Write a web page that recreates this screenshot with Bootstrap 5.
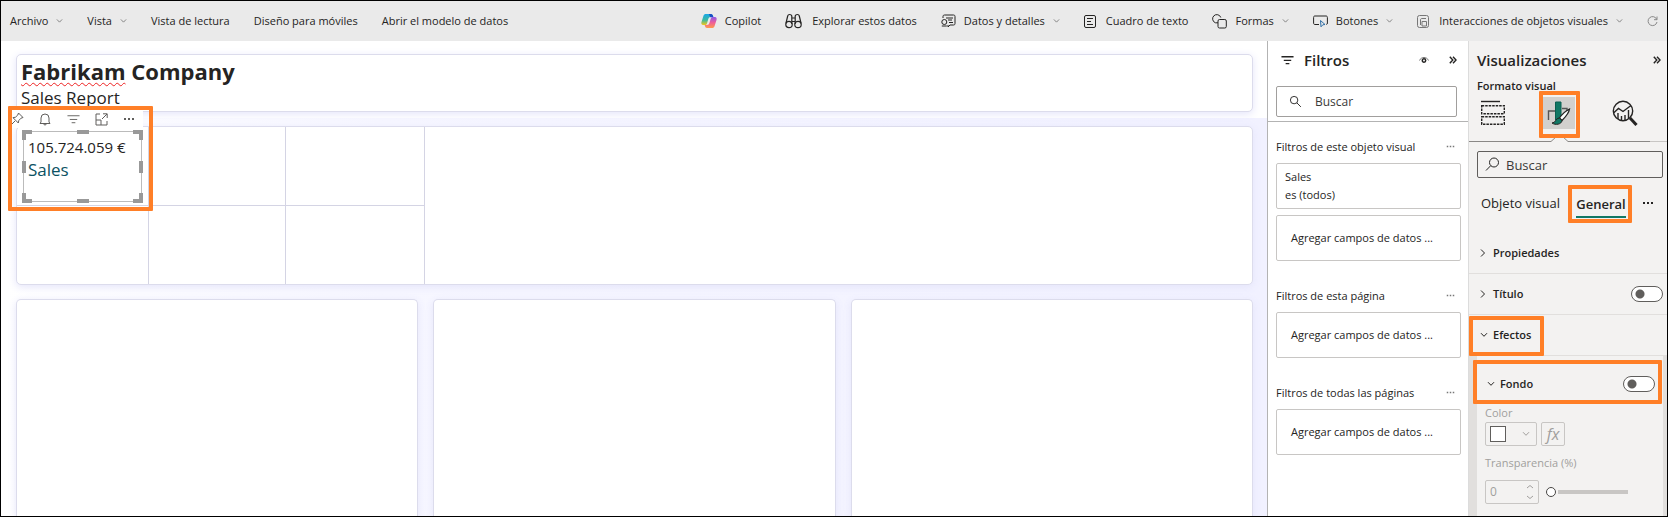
<!DOCTYPE html>
<html lang="es">
<head>
<meta charset="utf-8">
<meta name="viewport" content="width=device-width, initial-scale=1">
<title>Sales Report</title>
<link href="https://cdn.jsdelivr.net/npm/bootstrap@5.3.0/dist/css/bootstrap.min.css" rel="stylesheet">
<style>
:root{--ink:#252423;--orange:#ff7f27;--cardline:#dcdcec}
body{font-family:"Open Sans","Noto Sans",sans-serif;font-size:11px;line-height:18px;color:var(--ink);height:100vh;border:1px solid #000;overflow:hidden;background:#fff}
button{color:inherit;background:none;border:0;padding:0}
svg{display:block;flex:none;fill:none;stroke:currentColor}
.topbar{height:40px;background:#eaeaea;padding:0 9px;white-space:nowrap;overflow:hidden}
.topbar .group{gap:24px}
.topbar button{display:flex;align-items:center;gap:8px}
.topbar .lead-icon{margin-right:2px}
.topbar .chev{color:#777}
/* Report canvas */
.canvas{padding:13px 14px 0 15px;overflow:hidden;background:linear-gradient(90deg,#fff,#f7f7ff 30%,#f1f1ff) 0 77px no-repeat}
.tile{background:#fff;border:1px solid var(--cardline);border-radius:5px;box-shadow:0 2px 8px #e4e4fa}
.head-tile{height:58px;padding:1px 4px 0;margin-bottom:14px}
.head-tile h1{font-size:22px;line-height:30px;font-weight:700;margin:0}
.head-tile p{font-size:17px;line-height:24px;margin:0}
.spell{text-decoration:underline wavy #e22 1px;text-underline-offset:2px;text-decoration-skip-ink:none}
.kpi-tile{height:159px;margin-bottom:14px}
.kpi-grid{display:grid;grid-template-columns:132px 137px 139px;grid-template-rows:1fr 1fr;width:408px;height:100%}
.kpi-grid>div{border-right:1px solid #d4d4e4;border-bottom:1px solid #d4d4e4;position:relative}
.kpi-grid>div:nth-child(n+4){border-bottom:0}
.low-row{display:grid;grid-template-columns:repeat(3,1fr);gap:15px;flex:1}
.low-row .tile{border-bottom:0;border-radius:5px 5px 0 0}
.visual{position:absolute;left:6px;top:4px;width:119px;height:71px;border:1px solid #bbb;background:#fff;padding:4px}
.visual strong{display:block;font-size:15px;line-height:22px;font-weight:400;white-space:nowrap}
.visual span{display:block;font-size:17px;line-height:24px;color:#0b5263}
.visual>svg{position:absolute;left:-2px;top:-2px}
.tools{position:absolute;left:-14px;top:-17px;display:flex}
.tools button{width:28px;height:18px;background:#fff;color:#605e5c;display:flex;align-items:center;justify-content:center}
.hl{position:absolute;border:4px solid var(--orange);border-radius:1px;pointer-events:none;z-index:3}
.hl-kpi{left:-9px;top:-21px;width:145px;height:105px}
/* Filters */
.filters{width:201px;border-left:1px solid #b3b3b3;flex:none}
.filters .top{height:81px;border-bottom:1px solid #b3b3b3;padding:0 11px 0 8px}
.pane-title{font-size:15px;line-height:20px;font-weight:600;margin:0}
.filters .pane-head{height:37px;padding:1px 0 0 5px}
.filters .pane-title{margin-left:10px}
.find{border:1px solid #a19f9d;border-radius:2px;background:#fff;display:flex;align-items:center}
.find input{border:0;background:none;outline:0;padding:0;min-width:0;flex:1;color:#3b3a39}
.find input::placeholder{color:#3b3a39;opacity:1}
.filters .find{height:31px;margin-top:8px;padding-left:12px;gap:9px;font-size:12px}
.filter-sec{padding:0 7px 0 8px;margin-bottom:18px}
.filter-sec h3{font-size:11px;line-height:18px;font-weight:400;margin:0}
.filter-sec .sec-head{height:33px;padding:0 6px 0 0}
.filter-sec .sec-head button{color:#777}
.well-box{border:1px solid #c8c6c4;border-radius:2px;height:46px;padding:4px 8px;margin-bottom:6px}
.add-box{display:flex;align-items:center;padding-left:14px;margin-bottom:0}
/* Visualizations */
.viz{width:199px;background:#f3f2f1;border-left:1px solid #dcdcdc;flex:none}
.viz .pane-head{height:36px;padding:1px 6px 0 8px}
.viz h3{font-size:11px;line-height:18px;font-weight:600;margin:0 8px}
.modes{height:47px;position:relative;display:flex;justify-content:space-between;align-items:flex-start;padding:2px 30px 0 12px}
.modes button{width:24px;height:32px;display:flex;align-items:center;justify-content:center}
.modes button.on{width:32px;background:#d2d0ce}
.modes .rule{position:absolute;left:0;bottom:0;width:100%;height:7px}
.viz .find{height:27px;margin:9px 4px 0 8px;padding-left:7px;gap:6px;border-color:#605e5c;background:#f3f2f1;font-size:13px}
.tabs{height:49px;padding:0 13px 0 12px;margin-bottom:6px;font-size:13px;line-height:20px}
.tabs .on{font-weight:600;border-bottom:2px solid #117865;line-height:24px;margin-top:4px}
.fold{height:41px;border-bottom:1px solid #e1dfdd;padding:0 4px 0 11px;font-weight:600;position:relative}
.fold button,.bg-head button{display:flex;align-items:center;gap:7px;font-weight:600}
.fold button.open,.bg-head button.open{gap:5px}
.switch{appearance:none;width:32px;height:16px;border:1px solid #605e5c;border-radius:8px;background:radial-gradient(circle at 8px 7px,#605e5c 4px,#fff 5px);margin:0}
.sub{flex:1;background:#e1dfdd;padding:0 4px 0 8px}
.sub-in{background:#f3f2f1;padding:0 8px;height:100%;color:#a19f9d;position:relative}
.bg-head{height:48px;padding:8px 0 0 2px;color:var(--ink)}
.sub label,.sub .lab{display:block;font-size:11px;line-height:18px}
.swatch{width:52px;height:24px;border:1px solid #c8c6c4!important;border-radius:2px;display:flex;align-items:center;justify-content:space-between;padding:0 6px 0 4px!important}
.swatch i{width:16px;height:16px;border:1px solid #605e5c;background:#fff}
.fxb{width:24px;height:24px;border:1px solid #c8c6c4!important;border-radius:2px;font:italic 16px/20px "Open Sans",sans-serif}
.num{width:54px;height:24px;border:1px solid #c8c6c4;border-radius:2px;padding:0 4px;display:flex;align-items:center}
.num input{width:30px;border:0;background:none;padding:0;color:#a19f9d;font-size:12px}
.range{appearance:none;width:82px;height:12px;background:linear-gradient(#c8c6c4,#c8c6c4) 12px 4px/70px 4px no-repeat;margin:0 0 0 7px}
.range::-webkit-slider-thumb{appearance:none;width:10px;height:10px;border-radius:50%;border:1px solid #484644;background:#fff}
</style>
</head>
<body class="d-flex flex-column">
<svg width="0" height="0" class="position-absolute">
 <symbol id="cd" viewBox="0 0 8 6"><path d="M1 1.2 4 4.3 7 1.2"/></symbol>
 <symbol id="cr" viewBox="0 0 6 10"><path d="M1 1.5 4.5 5 1 8.5"/></symbol>
 <symbol id="mag" viewBox="0 0 14 14"><circle cx="5.5" cy="5.5" r="4"/><path d="m8.5 8.5 4.3 4.3"/></symbol>
 <symbol id="dots" viewBox="0 0 12 4"><path d="M1 2h2M5 2h2M9 2h2" stroke-width="2"/></symbol>
 <symbol id="dbl" viewBox="0 0 8 8"><path d="m.8.8 3 3.2-3 3.2M4 .8 7 4 4 7.2" stroke-width="1.4"/></symbol>
 <symbol id="fil" viewBox="0 0 14 10"><path d="M.5 1.5h13M3 5.5h8M5 9h4"/></symbol>
</svg>

<nav class="topbar d-flex align-items-center justify-content-between flex-shrink-0">
 <div class="group d-flex">
  <button>Archivo<svg class="chev" width="7" height="6"><use href="#cd"/></svg></button>
  <button>Vista<svg class="chev" width="7" height="6"><use href="#cd"/></svg></button>
  <button>Vista de lectura</button>
  <button>Diseño para móviles</button>
  <button>Abrir el modelo de datos</button>
 </div>
 <div class="group d-flex">
  <button>
   <svg width="16" height="16" viewBox="0 0 16 16">
    <defs><linearGradient id="g1" x2="0" y2="1"><stop stop-color="#1aa7e8"/><stop offset=".55" stop-color="#3cb9a0"/><stop offset="1" stop-color="#f5c518"/></linearGradient>
    <linearGradient id="g2" x2="0" y2="1"><stop stop-color="#8b5be8"/><stop offset=".5" stop-color="#ee5d9a"/><stop offset="1" stop-color="#ff9a4d"/></linearGradient></defs>
    <g stroke="none">
    <path fill="url(#g1)" d="M5 1h5c1.300 0 1.700 1 2 2l.4 1H9.500C8 4 7.600 5 7.200 6.300L6 10.500C5.600 11.600 5 12 4 12H2.200C.4 12 0 10.500.5 9l1.900-6C2.900 1.600 3.600 1 5 1z"/>
    <path fill="#1b4fc4" d="M8 1h2c1.300 0 1.700 1 2 2l.4 1.200H9.200z"/>
    <path fill="url(#g2)" d="M11 15H6c-1.300 0-1.700-1-2-2l-.4-1H6c1.400 0 2-.8 2.400-2l1.300-4.300C10 4.600 10.700 4 11.800 4h2C15.600 4 16 5.500 15.500 7l-1.900 6c-.5 1.400-1.200 2-2.600 2z"/>
    </g>
   </svg>Copilot</button>
  <button>
   <svg class="lead-icon" width="17" height="16" viewBox="0 0 17 16" stroke-width="1.200"><circle cx="4" cy="11.500" r="3.200"/><circle cx="13" cy="11.500" r="3.200"/><path d="M.9 10.500 2.700 3c.4-2 3.500-2 4.100 0v8M16.100 10.500 14.300 3c-.4-2-3.500-2-4.100 0v8M6.800 5h3.400M6.800 8.500h3.400"/></svg>Explorar estos datos</button>
  <button>
   <svg width="15" height="14" viewBox="0 0 15 14"><path d="M2 4V2.500C2 1.500 2.600 1 3.500 1h9c1 0 1.500.5 1.500 1.500v7c0 1-.5 1.500-1.500 1.500H9l-2 2v-2M5 4h7M7 6h4M8 8.500h4"/><circle cx="3.300" cy="8" r="2.500"/><path d="M.8 12h5"/></svg>Datos y detalles<svg class="chev" width="7" height="6"><use href="#cd"/></svg></button>
  <button>
   <svg class="lead-icon" width="12" height="13" viewBox="0 0 12 13"><rect x=".5" y=".5" width="11" height="12" rx="1.500"/><path d="M3 3.500h6M3 6.500h4M3 9.500h6"/></svg>Cuadro de texto</button>
  <button>
   <svg width="15" height="15" viewBox="0 0 15 15"><path d="M3.500 8.800A4.200 4.200 0 1 1 8.800 3.500"/><rect x="6" y="5.500" width="8.300" height="8.500" rx="1.500"/><path d="M3.500 8.800H6"/></svg>Formas<svg class="chev" width="7" height="6"><use href="#cd"/></svg></button>
  <button>
   <svg width="15" height="13" viewBox="0 0 15 13"><path d="M6 9.500H2C1 9.500.6 9 .6 8V2.500C.6 1.400 1 1 2 1h11c1 0 1.400.5 1.400 1.500V8c0 .8-.3 1.400-1 1.500"/><path d="m7.500 5.500 4.500 4-2.200.3-1.800 2z" stroke="#2f6ea5"/></svg>Botones<svg class="chev" width="7" height="6"><use href="#cd"/></svg></button>
  <button>
   <svg class="lead-icon" width="12" height="13" viewBox="0 0 12 13" color="#777"><rect x=".5" y=".5" width="11" height="12" rx="2"/><path d="M3.500 10V5c0-1 .5-1.500 1.500-1.500h4M5 6.500h4.500V11H5z"/></svg>Interacciones de objetos visuales<svg class="chev" width="7" height="6"><use href="#cd"/></svg></button>
  <button aria-label="Actualizar"><svg width="11" height="12" viewBox="0 0 11 12" color="#888"><path d="M9.800 4.500A4.500 4.500 0 1 0 10 7M10 1.500v3.200H7"/></svg></button>
 </div>
</nav>

<div class="d-flex flex-grow-1 overflow-hidden">
 <main class="canvas d-flex flex-column flex-grow-1">
  <header class="tile head-tile"><h1><span class="spell">Fabrikam</span> Company</h1><p>Sales Report</p></header>
  <section class="tile kpi-tile">
   <div class="kpi-grid">
    <div>
     <div class="tools">
      <button aria-label="Anclar"><svg width="14" height="14" viewBox="0 0 14 14"><path d="m8.500 1 4.500 4.500-2 .7-2.200 2.300-.5 2.500-5.300-5.300 2.500-.5 2.300-2.200zM5 9 1 13"/></svg></button>
      <button aria-label="Alerta"><svg width="12" height="13" viewBox="0 0 12 13"><path d="M2 9V5a4 4 0 0 1 8 0v4l1 1.500H1zM4.500 10.700c.3 1.700 2.700 1.700 3 0"/></svg></button>
      <button aria-label="Filtros"><svg width="13" height="10"><use href="#fil"/></svg></button>
      <button aria-label="Modo de enfoque"><svg width="13" height="13" viewBox="0 0 13 13"><path d="M5 1H1v11h11V8M8 .8h4.200V5M12 1 7 6M1 7h5v5"/></svg></button>
      <button aria-label="Más opciones"><svg width="12" height="4"><use href="#dots"/></svg></button>
     </div>
     <div class="visual"><strong>105.724.059 €</strong><span>Sales</span>
      <svg width="121" height="73" viewBox="0 0 121 73" color="#999" stroke-width="4"><path d="M2 10V2H10M111 2h8v8M119 63v8h-8M10 71H2v-8M55 2h12M55 71h12M2 31v12M119 31v12"/></svg>
     </div>
     <div class="hl hl-kpi"></div>
    </div>
    <div></div><div></div><div></div><div></div><div></div>
   </div>
  </section>
  <section class="low-row"><div class="tile"></div><div class="tile"></div><div class="tile"></div></section>
 </main>

 <aside class="filters">
  <div class="top">
   <div class="pane-head d-flex align-items-center">
    <svg width="13" height="10" stroke-width="1.400"><use href="#fil"/></svg><h2 class="pane-title me-auto">Filtros</h2>
    <button aria-label="Mostrar" class="me-3 pe-1"><svg width="10" height="8" viewBox="0 0 10 8"><path d="M.5 4.500C2 .5 8 .5 9.500 4.500" stroke="#777"/><circle cx="5" cy="4.500" r="1.700" stroke-width="1.500"/></svg></button>
    <button aria-label="Contraer"><svg width="8" height="8"><use href="#dbl"/></svg></button>
   </div>
   <div class="find"><svg width="13" height="13"><use href="#mag"/></svg><input type="text" placeholder="Buscar" aria-label="Buscar filtros" class="ps-1"></div>
  </div>
  <section class="filter-sec pt-2">
   <div class="sec-head d-flex align-items-center justify-content-between"><h3>Filtros de este objeto visual</h3><button aria-label="Más"><svg width="9" height="3"><use href="#dots"/></svg></button></div>
   <div class="well-box">Sales<br>es (todos)</div>
   <div class="well-box add-box">Agregar campos de datos ...</div>
  </section>
  <section class="filter-sec">
   <div class="sec-head d-flex align-items-center justify-content-between"><h3>Filtros de esta página</h3><button aria-label="Más"><svg width="9" height="3"><use href="#dots"/></svg></button></div>
   <div class="well-box add-box">Agregar campos de datos ...</div>
  </section>
  <section class="filter-sec">
   <div class="sec-head d-flex align-items-center justify-content-between"><h3>Filtros de todas las páginas</h3><button aria-label="Más"><svg width="9" height="3"><use href="#dots"/></svg></button></div>
   <div class="well-box add-box">Agregar campos de datos ...</div>
  </section>
 </aside>

 <aside class="viz d-flex flex-column">
  <div class="pane-head d-flex align-items-center justify-content-between"><h2 class="pane-title">Visualizaciones</h2><button aria-label="Contraer"><svg width="8" height="8"><use href="#dbl"/></svg></button></div>
  <h3>Formato visual</h3>
  <div class="modes">
   <button aria-label="Compilar"><svg width="24" height="26" viewBox="0 0 24 26"><path d="M0 1.500h19" stroke-width="1.400"/><path d="M.7 5.700h22.600v8H.7zM.7 16.700h22.600v7.500H.7z" stroke-dasharray="2.500 1" stroke-width="1.400"/></svg></button>
   <button aria-label="Formato" class="on position-relative"><svg width="24" height="26" viewBox="0 0 24 26"><path d="M1.500 20V11h6.500M15 8.500h5v3" stroke-width="1.400" stroke="#555"/><path d="M8.500 2h5.500v15l-5.500 3z" fill="#117865" stroke="#0b5f50"/><path d="M22.500 9c-3 1.500-8 6-10 9l2.500 2.500c3-3 7-7.500 7.500-11.500z" fill="#fff" stroke-width="1.300"/><path d="M12.300 18c-4 0-3.300 5-7.300 5 3.500 2.500 9.500 1.500 10-2.500z" fill="#117865"/></svg><span class="hl" style="inset:-6px -5px -9px -4px"></span></button>
   <button aria-label="Análisis"><svg width="26" height="26" viewBox="0 0 26 26" stroke-width="1.400"><circle cx="11" cy="11" r="9.700"/><path d="m1.500 13 5-4.500 4.500 3 8-6M6 19v-6M9.500 20v-4M13 20v-5M16.500 18v-8"/><path d="m18 18 6.500 7" stroke-width="3"/></svg></button>
   <svg class="rule" viewBox="0 0 198 7" preserveAspectRatio="none" color="#8a8886"><path d="M0 6.500h82l6-5.500h5l6 5.500h82"/><path d="M181 6.500h17" stroke="#c8c6c4"/></svg>
  </div>
  <div class="find"><svg width="15" height="15" viewBox="0 0 15 15"><circle cx="9" cy="5.500" r="4.500"/><path d="M5.700 8.700 1 13.500"/></svg><input type="text" placeholder="Buscar" aria-label="Buscar propiedades"></div>
  <div class="tabs d-flex align-items-center justify-content-between"><button>Objeto visual</button><button class="on position-relative">General<span class="hl" style="inset:-7px -6px -7px -8px"></span></button><button aria-label="Más"><svg width="12" height="4"><use href="#dots"/></svg></button></div>
  <div class="fold d-flex align-items-center"><button><svg width="6" height="10"><use href="#cr"/></svg>Propiedades</button></div>
  <div class="fold d-flex align-items-center justify-content-between"><button><svg width="6" height="10"><use href="#cr"/></svg>Título</button><input class="switch" type="checkbox" role="switch" aria-label="Título"></div>
  <div class="fold d-flex align-items-center"><button class="open"><svg width="8" height="6"><use href="#cd"/></svg>Efectos</button><span class="hl" style="inset:1px 123px -1px 0"></span></div>
  <div class="sub">
   <div class="sub-in">
    <div class="hl" style="left:-4px;right:1px;top:4px;height:44px"></div>
    <div class="bg-head d-flex align-items-center justify-content-between"><button class="open"><svg width="8" height="6"><use href="#cd"/></svg>Fondo</button><input class="switch" type="checkbox" role="switch" aria-label="Fondo"></div>
    <div class="lab">Color</div>
    <div class="d-flex gap-1 mb-2"><button class="swatch" aria-label="Color"><i></i><svg width="8" height="6"><use href="#cd"/></svg></button><button class="fxb">fx</button></div>
    <label for="tr">Transparencia (%)</label>
    <div class="d-flex align-items-center mt-2"><div class="num"><input id="tr" type="text" value="0"><svg width="8" height="16" viewBox="0 0 8 16" class="ms-auto"><path d="m1 4 3-2.500L7 4M1 12l3 2.500L7 12"/></svg></div><input class="range" type="range" value="0" aria-label="Transparencia"></div>
   </div>
  </div>
 </aside>
</div>
<script src="https://cdn.jsdelivr.net/npm/bootstrap@5.3.0/dist/js/bootstrap.bundle.min.js"></script>
</body>
</html>
